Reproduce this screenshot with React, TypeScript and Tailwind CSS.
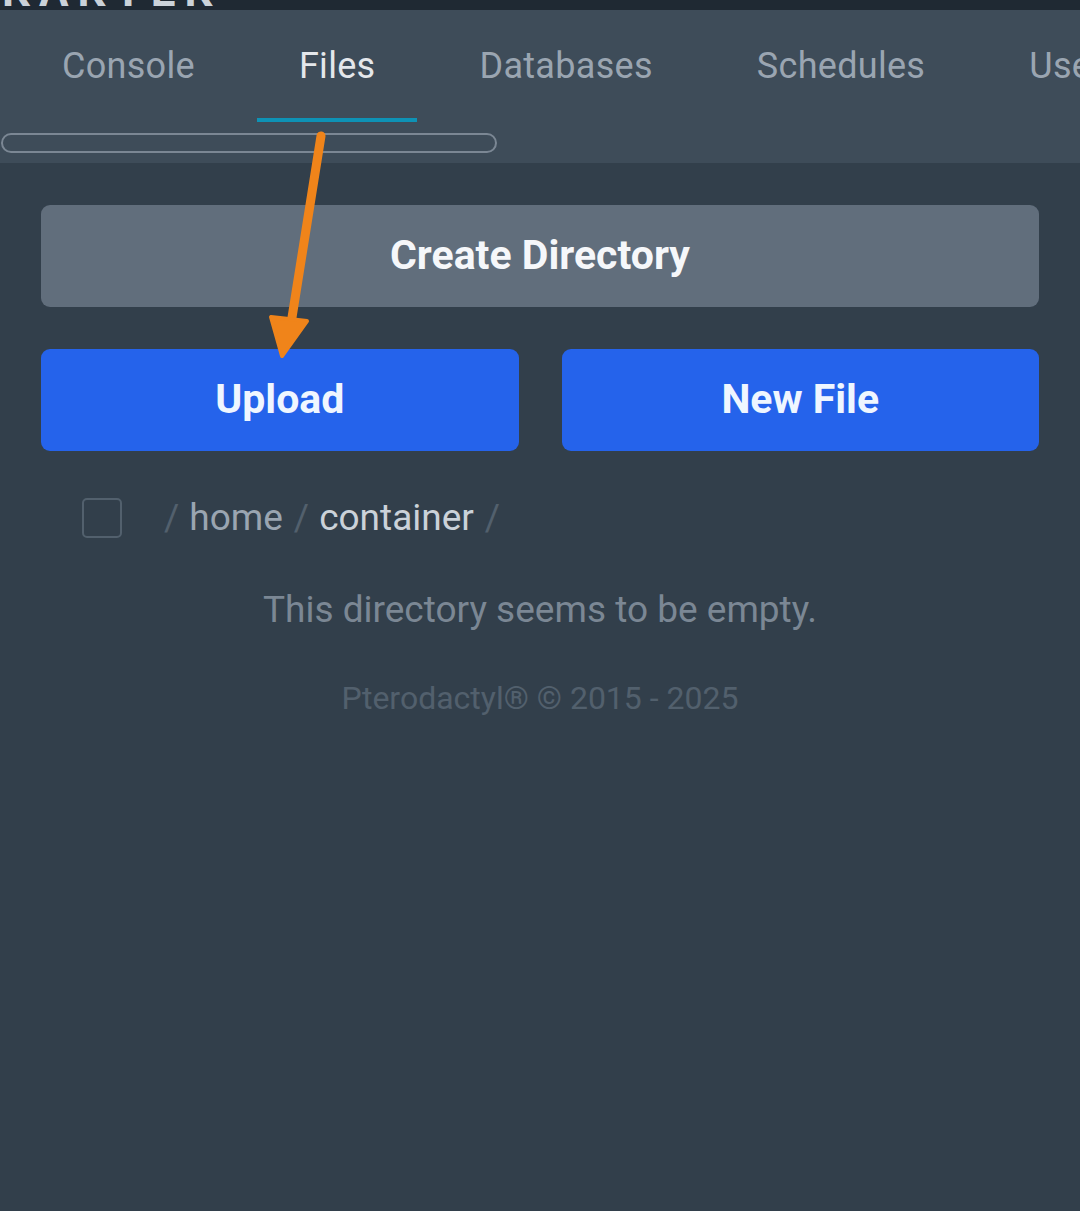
import React from "react";

const tabs = ["Console", "Files", "Databases", "Schedules", "Users", "Backups"];

export default function App() {
  return (
    <div className="relative min-h-[1211px] w-[1080px] overflow-hidden bg-[#323f4b] font-['Roboto',sans-serif]">
      {/* top bar, mostly scrolled away */}
      <div className="h-[10px] overflow-hidden bg-[#1f2933]">
        <div className="-mt-[27px] whitespace-nowrap pl-[2px] text-[44px] font-bold leading-[36px] tracking-[9px] text-[#cbd2d9]">
          KAKYEK
        </div>
      </div>

      {/* sub navigation */}
      <div className="bg-[#3e4c59] pb-[10px]">
        <div className="flex overflow-hidden whitespace-nowrap pl-[10px]">
          {tabs.map((t) => (
            <div
              key={t}
              className={
                t === "Files"
                  ? "mx-[10px] shrink-0 border-b-4 border-[#0e92b5] px-[42px] pb-[28px] pt-[32px] text-[36px] leading-[48px] tracking-[0.3px] text-[#e4e7eb]"
                  : "mx-[10px] shrink-0 border-b-4 border-transparent px-[42px] pb-[28px] pt-[32px] text-[36px] leading-[48px] tracking-[0.3px] text-[#9aa5b1]"
              }
            >
              {t}
            </div>
          ))}
        </div>
        <div className="ml-[1px] mt-[11px] h-[20px] w-[496px] rounded-full border-2 border-[#7b8794]"></div>
      </div>

      {/* content */}
      <div className="px-[41px] pt-[42px]">
        <button className="flex h-[102px] w-full items-center justify-center rounded-[9px] bg-[#616e7c] text-[41px] font-bold text-[#f5f7fa]">
          Create Directory
        </button>
        <div className="mt-[42px] flex gap-[43px]">
          <button className="flex h-[102px] flex-1 items-center justify-center rounded-[9px] bg-[#2563eb] text-[41px] font-bold text-[#eff6ff]">
            Upload
          </button>
          <button className="flex h-[102px] flex-1 items-center justify-center rounded-[9px] bg-[#2563eb] text-[41px] font-bold text-[#eff6ff]">
            New File
          </button>
        </div>

        <div className="mt-[47px] flex items-center pl-[41px]">
          <div className="h-[40px] w-[40px] rounded-[5px] border-2 border-[#52606d]"></div>
          <div className="ml-[42px] flex items-center text-[37px] leading-[40px]">
            <span className="text-[#52606d]">/</span>
            <span className="ml-[10px] text-[#9aa5b1]">home</span>
            <span className="ml-[11px] text-[#52606d]">/</span>
            <span className="ml-[10px] text-[#cbd2d9]">container</span>
            <span className="ml-[11px] text-[#52606d]">/</span>
          </div>
        </div>

        <p className="mt-[50px] text-center text-[37px] leading-[44px] text-[#7b8794]">
          This directory seems to be empty.
        </p>
        <p className="mt-[44px] text-center text-[32px] leading-[44px] text-[#52606d]">
          Pterodactyl® © 2015 - 2025
        </p>
      </div>

      {/* annotation arrow */}
      <svg className="pointer-events-none absolute left-0 top-0" width="1080" height="1211">
        <line x1="321" y1="136" x2="290" y2="330" stroke="#f0841a" strokeWidth="9" strokeLinecap="round" />
        <polygon points="271,317 307,321 282,356" fill="#f0841a" stroke="#f0841a" strokeWidth="4" strokeLinejoin="round" />
      </svg>
    </div>
  );
}
